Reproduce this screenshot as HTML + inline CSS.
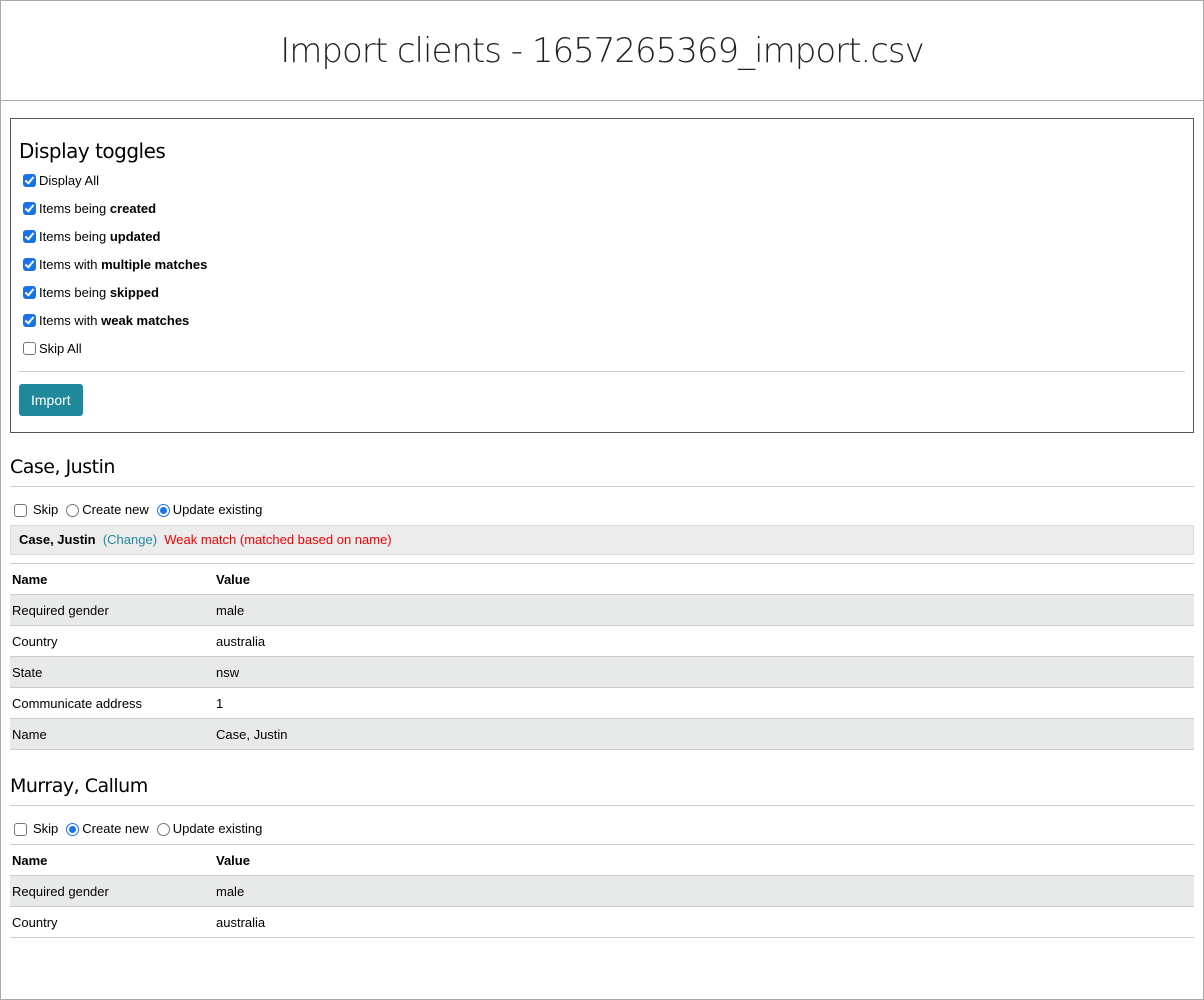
<!DOCTYPE html>
<html><head><style>
*{box-sizing:border-box}
body{margin:0;width:1204px;height:925px;overflow:hidden;font-family:"Liberation Sans",sans-serif;font-size:13px;color:#000;background:#fff}
.page{position:absolute;left:0;top:0;width:1204px;height:1000px;border:1px solid #aaa}
.hdr{height:100px;border-bottom:1px solid #aaa;text-align:center;font-size:34px;line-height:100px;color:#222;font-family:"DejaVu Sans","Liberation Sans",sans-serif;font-weight:300;letter-spacing:-1px}
.box{position:absolute;left:9px;top:117px;width:1184px;height:315px;border:1px solid #555;padding:0 8px}
.box h3{margin:20px 0 3px;font-weight:normal;font-size:20px;font-family:"DejaVu Sans",sans-serif;letter-spacing:-0.5px}
.cb{height:28px;display:flex;align-items:center;margin-left:4px}
.chk{width:13px;height:13px;border-radius:3px;background:#1a73e8;margin-right:3px;position:relative}
.chk:after{content:"";position:absolute;left:4px;top:1px;width:3px;height:7px;border:solid #fff;border-width:0 2px 2px 0;transform:rotate(40deg)}
.un{width:13px;height:13px;border-radius:3px;border:1px solid #777;margin-right:3px;background:#fff}
hr{border:0;border-top:1px solid #ccc;margin:9px 0 12px}
.btn{display:inline-block;background:#20889b;color:#fff;font-size:14px;padding:8px 12px;border-radius:3px}
.sec{position:absolute;left:9px;width:1184px}
.sec h2{font-weight:normal;font-size:19px;font-family:"DejaVu Sans",sans-serif;margin:0;padding-bottom:8px;border-bottom:1px solid #ccc;letter-spacing:-0.5px}
.opts{display:flex;align-items:flex-end;height:38px;padding-bottom:8px;padding-left:4px}
.rd{width:13px;height:13px;border-radius:50%;border:1px solid #777;display:inline-block;margin:0 3px 0 8px;position:relative}
.rd.on{border:1px solid #1a73e8}
.rd.on:after{content:"";position:absolute;left:2px;top:2px;width:7px;height:7px;border-radius:50%;background:#1a73e8}
.match{background:#ececec;border:1px solid #ddd;height:30px;line-height:28px;padding-left:8px;margin-bottom:8px}
table{width:100%;border-collapse:collapse;border-top:1px solid #ccc}
td,th{text-align:left;height:31px;padding:0 2px;border-bottom:1px solid #ccc;font-size:13px}
th{width:204px}
tr.g td{background:#e8eaea}
</style></head><body><div class="page">
<div class="hdr">Import clients - 1657265369_import.csv</div>
<div class="box">
<h3>Display toggles</h3>
<div class="cb"><span class="chk"></span>Display All</div>
<div class="cb"><span class="chk"></span>Items being&nbsp;<b>created</b></div>
<div class="cb"><span class="chk"></span>Items being&nbsp;<b>updated</b></div>
<div class="cb"><span class="chk"></span>Items with&nbsp;<b>multiple matches</b></div>
<div class="cb"><span class="chk"></span>Items being&nbsp;<b>skipped</b></div>
<div class="cb"><span class="chk"></span>Items with&nbsp;<b>weak matches</b></div>
<div class="cb"><span class="un"></span>Skip All</div>
<hr><span class="btn">Import</span>
</div>
<div class="sec" style="top:455px">
<h2>Case, Justin</h2>
<div class="opts"><span class="un" style="margin-right:6px"></span>Skip<span class="rd"></span>Create new<span class="rd on"></span>Update existing</div>
<div class="match"><b>Case, Justin</b>&nbsp;&nbsp;<span style="color:#20889b">(Change)</span>&nbsp;&nbsp;<span style="color:#e00">Weak match (matched based on name)</span></div>
<table><tr><th>Name</th><th style="width:auto">Value</th></tr>
<tr class="g"><td>Required gender</td><td>male</td></tr>
<tr><td>Country</td><td>australia</td></tr>
<tr class="g"><td>State</td><td>nsw</td></tr>
<tr><td>Communicate address</td><td>1</td></tr>
<tr class="g"><td>Name</td><td>Case, Justin</td></tr></table>
</div>
<div class="sec" style="top:774px">
<h2>Murray, Callum</h2>
<div class="opts"><span class="un" style="margin-right:6px"></span>Skip<span class="rd on"></span>Create new<span class="rd"></span>Update existing</div>
<table><tr><th>Name</th><th style="width:auto">Value</th></tr>
<tr class="g"><td>Required gender</td><td>male</td></tr>
<tr><td>Country</td><td>australia</td></tr></table>
</div>
</div></body></html>
